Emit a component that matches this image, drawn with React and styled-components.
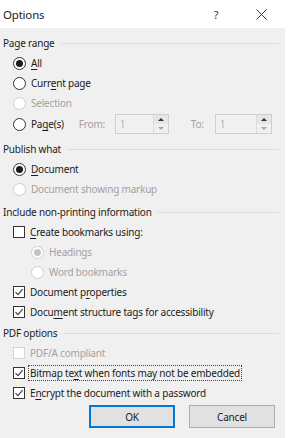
import React from "react";
import styled, { createGlobalStyle } from "styled-components";

const GlobalStyle = createGlobalStyle`
  html, body {
    margin: 0;
    padding: 0;
    background: #ffffff;
  }
  body {
    font-family: "Noto Sans", "Open Sans", sans-serif;
    font-size: 10px;
    letter-spacing: -0.2px;
    color: #1b1b1b;
  }
`;

const Dialog = styled.div`
  width: 285px;
  height: 438px;
  display: flex;
  flex-direction: column;
  background: #f0f0f0;
`;

const TitleBar = styled.div`
  height: 28px;
  background: #ffffff;
  display: flex;
  align-items: center;
  padding-left: 3px;
`;

const Title = styled.div`
  flex: 1;
  font-size: 11.5px;
  color: #222;
`;

const TitleButton = styled.div`
  width: 28px;
  display: flex;
  justify-content: center;
  align-items: center;
  font-size: 11px;
  color: #333;
  margin-right: ${(p) => p.$gap || 0}px;
`;

const Body = styled.div`
  flex: 1;
  display: flex;
  flex-direction: column;
  padding: 5px 6px 0 3px;
`;

const Group = styled.div`
  display: flex;
  flex-direction: column;
  margin-bottom: ${(p) => p.$after || 0}px;
`;

const GroupHeader = styled.div`
  display: flex;
  align-items: center;
  height: 20px;
  gap: 6px;
  &::after {
    content: "";
    flex: 1;
    height: 1px;
    background: #dcdcdc;
  }
`;

const Row = styled.div`
  display: flex;
  align-items: center;
  height: 20px;
  padding-left: ${(p) => p.$indent || 10}px;
  color: ${(p) => (p.$disabled ? "#a2a2a2" : "#1b1b1b")};
`;

const RadioCircle = styled.span`
  width: 13px;
  height: 13px;
  box-sizing: border-box;
  border-radius: 50%;
  border: 1px solid ${(p) => (p.$disabled ? "#cfcfcf" : "#333")};
  background: #fff;
  display: flex;
  align-items: center;
  justify-content: center;
  margin-right: 4px;
  flex: none;
  &::after {
    content: "";
    display: ${(p) => (p.$checked ? "block" : "none")};
    width: 7px;
    height: 7px;
    border-radius: 50%;
    background: ${(p) => (p.$disabled ? "#c2c2c2" : "#1b1b1b")};
  }
`;

const CheckBox = styled.span`
  width: 12px;
  height: 12px;
  box-sizing: border-box;
  border: 1px solid ${(p) => (p.$disabled ? "#d6d6d6" : "#333")};
  background: #fff;
  display: flex;
  align-items: center;
  justify-content: center;
  margin-right: 4px;
  flex: none;
`;

const Label = styled.span`
  display: inline-block;
  line-height: 14px;
  padding: 0 1px;
  white-space: nowrap;
  border: 1px ${(p) => (p.$focused ? "dotted #444" : "solid transparent")};
  margin-left: -1px;
  u {
    text-decoration: underline;
    text-underline-offset: 2px;
  }
`;

const PagesRow = styled(Row)`
  height: 22px;
`;

const FieldLabel = styled.span`
  color: #a2a2a2;
  margin-left: ${(p) => p.$ml}px;
  width: ${(p) => p.$w}px;
`;

const Spin = styled.div`
  display: flex;
  width: ${(p) => p.$w}px;
  height: 20px;
  box-sizing: border-box;
  border: 1px solid #cfcfcf;
  background: #f0f0f0;
`;

const SpinValue = styled.div`
  flex: 1;
  color: #b0b0b0;
  padding-left: 4px;
  line-height: 18px;
`;

const SpinButtons = styled.div`
  width: 14px;
  display: flex;
  flex-direction: column;
  border-left: 1px solid #dcdcdc;
`;

const SpinArrow = styled.div`
  flex: 1;
  display: flex;
  align-items: center;
  justify-content: center;
  background: ${(p) => (p.$up ? "#e6e6e6" : "#f0f0f0")};
  &::after {
    content: "";
    border-left: 3px solid transparent;
    border-right: 3px solid transparent;
    ${(p) =>
      p.$up
        ? "border-bottom: 3px solid #333;"
        : "border-top: 3px solid #a8a8a8;"}
  }
`;

const Buttons = styled.div`
  display: flex;
  justify-content: flex-end;
  gap: 14px;
  margin-top: 2px;
  padding-right: 4px;
`;

const Button = styled.div`
  width: 86px;
  height: 23px;
  box-sizing: border-box;
  display: flex;
  align-items: center;
  justify-content: center;
  background: #e1e1e1;
  border: 1px solid ${(p) => (p.$primary ? "#0078d7" : "#adadad")};
  box-shadow: ${(p) => (p.$primary ? "inset 0 0 0 1px #0078d7" : "none")};
  color: #1b1b1b;
`;

const Check = () => (
  <svg width="10" height="10" viewBox="0 0 10 10">
    <path
      d="M1.5 5.2 L4 7.6 L8.6 2.2"
      fill="none"
      stroke="#3a3a3a"
      strokeWidth="1.1"
    />
  </svg>
);

const Radio = ({ checked, disabled, indent, children }) => (
  <Row $indent={indent} $disabled={disabled}>
    <RadioCircle $checked={checked} $disabled={disabled} />
    <Label>{children}</Label>
  </Row>
);

const CheckRow = ({ checked, disabled, focused, indent, children }) => (
  <Row $indent={indent} $disabled={disabled}>
    <CheckBox $disabled={disabled}>{checked && <Check />}</CheckBox>
    <Label $focused={focused}>{children}</Label>
  </Row>
);

const SpinBox = ({ w }) => (
  <Spin $w={w}>
    <SpinValue>1</SpinValue>
    <SpinButtons>
      <SpinArrow $up />
      <SpinArrow />
    </SpinButtons>
  </Spin>
);

const CloseIcon = () => (
  <svg width="11" height="11" viewBox="0 0 11 11">
    <path d="M0.5 0.5 L10.5 10.5 M10.5 0.5 L0.5 10.5" stroke="#333" strokeWidth="1" />
  </svg>
);

export default function App() {
  return (
    <>
      <GlobalStyle />
      <Dialog>
        <TitleBar>
          <Title>Options</Title>
          <TitleButton $gap={17}>?</TitleButton>
          <TitleButton $gap={10}>
            <CloseIcon />
          </TitleButton>
        </TitleBar>
        <Body>
          <Group $after={4}>
            <GroupHeader>Page range</GroupHeader>
            <Radio checked>
              <u>A</u>ll
            </Radio>
            <Radio>
              Curr<u>e</u>nt page
            </Radio>
            <Radio disabled>Selection</Radio>
            <PagesRow>
              <RadioCircle />
              <Label>
                Pa<u>g</u>e(s)
              </Label>
              <FieldLabel $ml={13} $w={36}>From:</FieldLabel>
              <SpinBox w={54} />
              <FieldLabel $ml={22} $w={24}>To:</FieldLabel>
              <SpinBox w={57} />
            </PagesRow>
          </Group>
          <Group $after={3}>
            <GroupHeader>Publish what</GroupHeader>
            <Radio checked>
              <u>D</u>ocument
            </Radio>
            <Radio disabled>Document showing markup</Radio>
          </Group>
          <Group $after={1}>
            <GroupHeader>Include non-printing information</GroupHeader>
            <CheckRow>
              <u>C</u>reate bookmarks using:
            </CheckRow>
            <Radio checked disabled indent={28}>
              Headings
            </Radio>
            <Radio disabled indent={28}>
              Word bookmarks
            </Radio>
            <CheckRow checked>
              Document p<u>r</u>operties
            </CheckRow>
            <CheckRow checked>
              Docu<u>m</u>ent structure tags for accessibility
            </CheckRow>
          </Group>
          <Group>
            <GroupHeader>PDF options</GroupHeader>
            <CheckRow disabled>PDF/A compliant</CheckRow>
            <CheckRow checked focused>
              Bitmap te<u>x</u>t when fonts may not be embedded
            </CheckRow>
            <CheckRow checked>
              E<u>n</u>crypt the document with a password
            </CheckRow>
          </Group>
          <Buttons>
            <Button $primary>OK</Button>
            <Button>Cancel</Button>
          </Buttons>
        </Body>
      </Dialog>
    </>
  );
}
